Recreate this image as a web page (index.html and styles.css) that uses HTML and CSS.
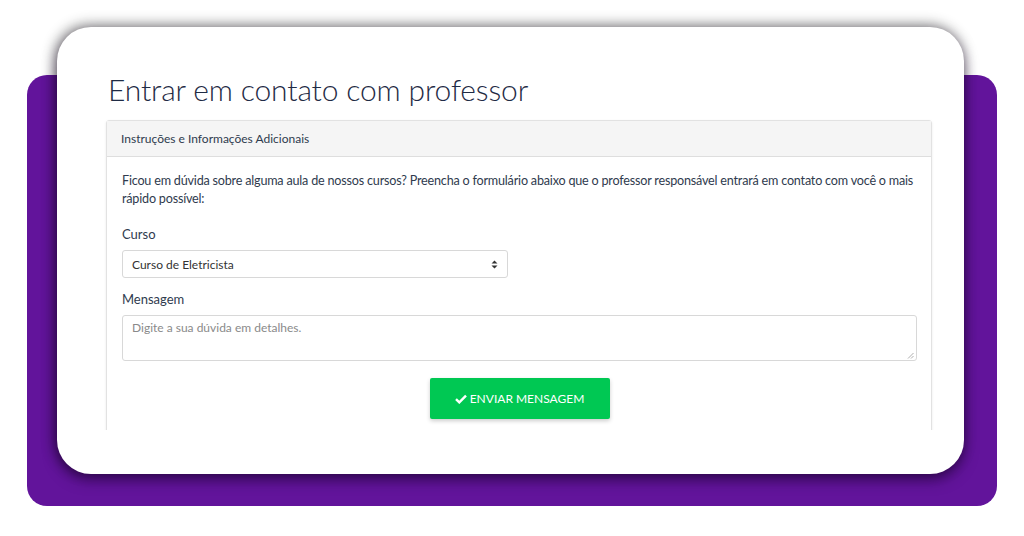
FILE: index.html
```html
<!DOCTYPE html>
<html lang="pt-BR">
<head>
<meta charset="utf-8">
<title>Entrar em contato com professor</title>
<link rel="stylesheet" href="styles.css">
</head>
<body>
<div class="stage">
  <div class="backdrop"></div>
  <div class="card">
    <div class="card-clip">
      <h1 class="title">Entrar em contato com professor</h1>
      <div class="panel">
        <div class="panel-head">Instruções e Informações Adicionais</div>
        <div class="panel-body">
          <p class="intro">Ficou em dúvida sobre alguma aula de nossos cursos? Preencha o formulário abaixo que o professor responsável entrará em contato com você o mais rápido possível:</p>
          <label class="label">Curso</label>
          <div class="select">
            <span>Curso de Eletricista</span>
            <svg class="caret" width="7" height="9" viewBox="0 0 7 9"><path d="M0.5 3.6 L3.5 0.6 L6.5 3.6Z M0.5 5.4 L3.5 8.4 L6.5 5.4Z" fill="#333"/></svg>
          </div>
          <label class="label label-msg">Mensagem</label>
          <div class="textarea">
            <span class="placeholder">Digite a sua dúvida em detalhes.</span>
            <svg class="grip" width="7" height="7" viewBox="0 0 7 7"><path d="M6.5 1 L1 6.5 M6.5 4 L4 6.5" stroke="#999" stroke-width="0.8"/></svg>
          </div>
          <div class="actions">
            <button class="btn"><svg class="check" width="12" height="10" viewBox="0 0 12 10"><path d="M1 5.2 L4.3 8.4 L11 1.6" fill="none" stroke="#fff" stroke-width="2.4"/></svg>ENVIAR MENSAGEM</button>
          </div>
        </div>
      </div>
    </div>
  </div>
</div>
</body>
</html>
```

FILE: styles.css
```css
* { box-sizing: border-box; }
html, body { margin: 0; padding: 0; background: #fff; }
body { width: 1024px; height: 536px; overflow: hidden; font-family: "Lato", "Open Sans", sans-serif; }

.stage { display: grid; width: 1024px; height: 536px; }

.backdrop {
  grid-area: 1 / 1;
  margin: 75px 27px 0 27px;
  height: 431px;
  background: #62149b;
  border-radius: 20px;
}

.card {
  grid-area: 1 / 1;
  margin: 27px 60px 0 57px;
  height: 447px;
  background: #fff;
  border-radius: 34px;
  box-shadow: -2px -2px 14px rgba(0, 0, 0, 0.45), 0 6px 14px rgba(30, 0, 50, 0.55);
}

.card-clip {
  height: 403px;
  overflow: hidden;
  padding: 0 32px 0 49px;
}

.title {
  margin: 46px 0 15px 2px;
  font-size: 30px;
  line-height: 32px;
  font-weight: 300;
  letter-spacing: -0.15px;
  color: #1f2b45;
}

.panel {
  border: 1px solid #e2e2e2;
  border-radius: 3px 3px 0 0;
  box-shadow: 0 1px 3px rgba(0, 0, 0, 0.08);
  color: #2d3748;
}

.panel-head {
  height: 36px;
  background: #f5f5f5;
  border-bottom: 1px solid #dedede;
  padding: 0 15px 0 14px;
  font-size: 12px;
  line-height: 35px;
  color: #2f3b4e;
}

.panel-body { padding: 15px 14px 30px 15px; }

.intro {
  margin: 0 0 17px;
  font-size: 12.6px;
  line-height: 18px;
  letter-spacing: -0.2px;
  color: #2f3b4e;
}

.label {
  display: block;
  font-size: 13px;
  line-height: 18px;
  margin-bottom: 7px;
  color: #2f3b4e;
}

.label-msg { margin-top: 12px; }

.select {
  width: 386px;
  height: 28px;
  border: 1px solid #d8d8d8;
  border-radius: 3px;
  display: flex;
  align-items: center;
  justify-content: space-between;
  padding: 0 9px;
  font-size: 12px;
  color: #333;
}

.textarea {
  height: 46px;
  border: 1px solid #d8d8d8;
  border-radius: 3px;
  padding: 3px 9px;
  display: flex;
  justify-content: space-between;
  align-items: flex-start;
  font-size: 12px;
  line-height: 18px;
}

.placeholder { color: #8a8a8a; }
.grip { align-self: flex-end; margin: 0 -7px -2px 0; }

.actions { display: flex; justify-content: center; margin-top: 17px; }

.btn {
  width: 180px;
  height: 41px;
  border: 0;
  border-radius: 2px;
  background: #00c853;
  color: #fff;
  font-family: inherit;
  font-size: 12px;
  display: flex;
  align-items: center;
  justify-content: center;
  gap: 3px;
  box-shadow: 0 2px 4px rgba(0, 0, 0, 0.2);
  padding: 0;
}
```
